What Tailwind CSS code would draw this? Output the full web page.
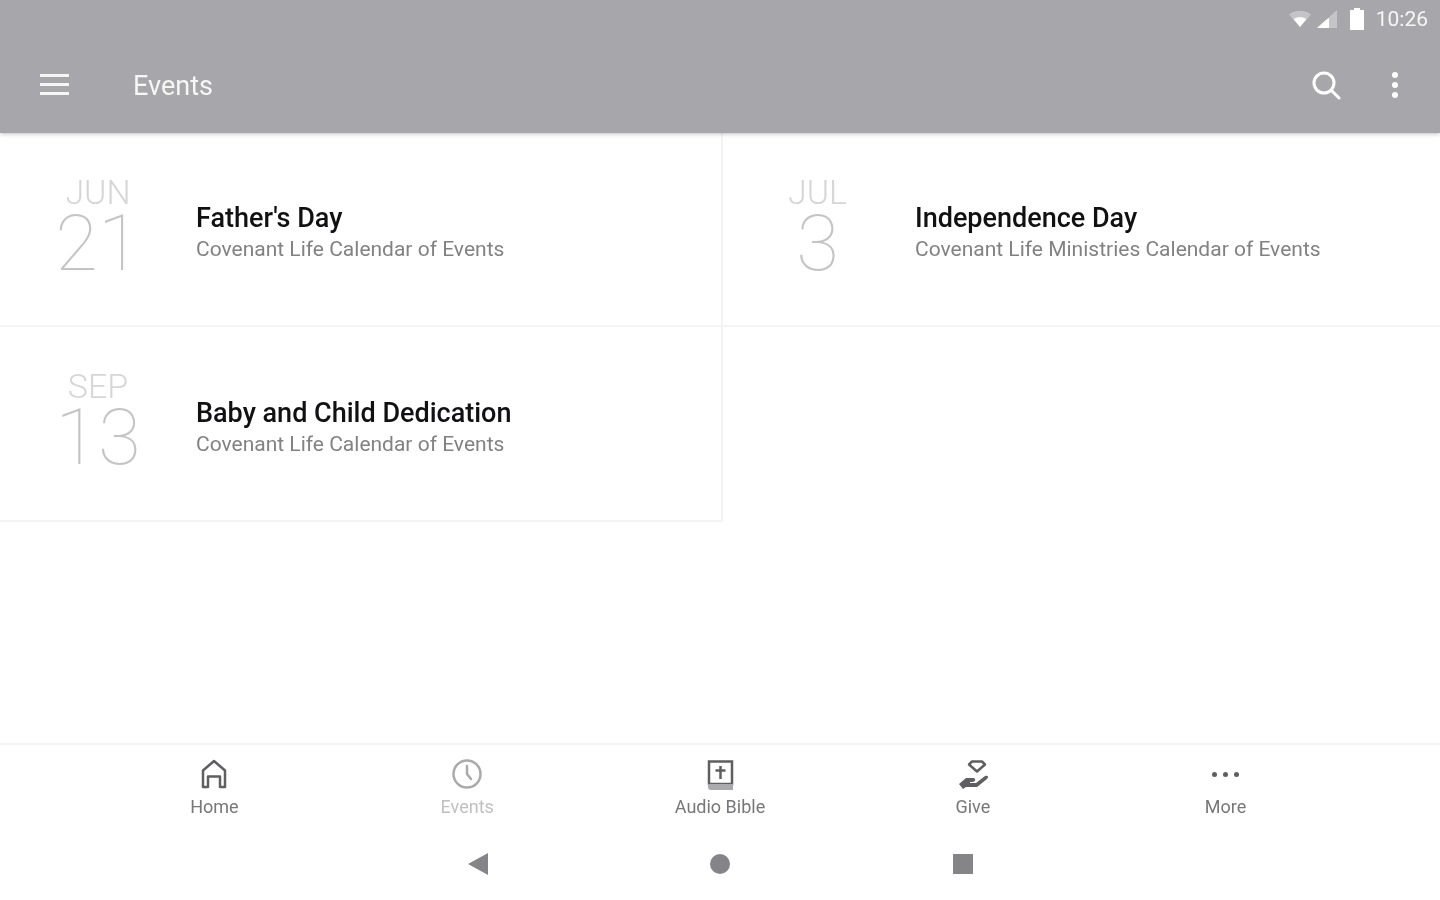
<!DOCTYPE html>
<html lang="en">
<head>
  <meta charset="UTF-8" />
  <title>Events</title>
  <script src="https://cdn.jsdelivr.net/npm/@tailwindcss/browser@4"></script>
</head>
<body class="bg-white h-[900px] w-[1440px] overflow-hidden flex flex-col font-['Roboto',sans-serif] blur-[0.5px]">

  <!-- app bar with status row -->
  <header class="h-[133px] bg-[#a7a7ab] shrink-0 shadow-[0_1px_4px_rgba(0,0,0,0.25)] relative">
    <div class="h-[38px] flex items-center justify-end pr-[12px]">
      <svg class="w-[22px] h-[16px] mr-[6px]" viewBox="0 0 22 16"><path d="M0 3.5C6-1.500 16-1.500 22 3.500L11 16z" fill="#fff" fill-opacity="0.35"/><path d="M4.500 8C8 5.500 14 5.500 17.500 8L11 16z" fill="#fff"/></svg>
      <svg class="w-[20px] h-[18px] mr-[12px]" viewBox="0 0 20 18"><path d="M20 0V18H0z" fill="#fff" fill-opacity="0.35"/><path d="M12 8V18H0L9 10z" fill="#fff"/></svg>
      <svg class="w-[16px] h-[22px] mr-[11px]" viewBox="0 0 16 22"><path d="M5 0h6v2h4v20H1V2h4z" fill="#fff"/></svg>
      <span class="text-[21px] leading-none text-white/90">10:26</span>
    </div>
    <div class="h-[95px] flex items-center pb-[2px]">
      <div class="w-[133px] pl-[40px] shrink-0">
        <div class="w-[29px] flex flex-col gap-[6px]">
          <div class="h-[3px] bg-white/90"></div>
          <div class="h-[3px] bg-white/90"></div>
          <div class="h-[3px] bg-white/90"></div>
        </div>
      </div>
      <h1 class="text-[27px] text-white/90 flex-1 pt-[4px]">Events</h1>
      <svg class="w-[30px] h-[30px] mr-[51px] ml-[1px]" viewBox="0 0 30 30" fill="none" stroke="#fff" stroke-width="3" stroke-linecap="round"><circle cx="13" cy="13" r="10"/><path d="M20.500 20.500 28 28"/></svg>
      <div class="w-[6px] flex flex-col gap-[4px] mr-[42px]">
        <div class="h-[6px] rounded-full bg-white"></div>
        <div class="h-[6px] rounded-full bg-white"></div>
        <div class="h-[6px] rounded-full bg-white"></div>
      </div>
    </div>
  </header>

  <!-- events -->
  <main class="flex-1 min-h-0">
    <div class="grid grid-cols-[723px_1fr]">
      <div class="h-[194px] border-r-2 border-b-2 border-[#f4f4f5] flex items-center">
        <div class="w-[196px] shrink-0 flex flex-col items-center pb-[6px]">
          <div class="text-[34px] leading-[34px] font-light text-[#d6d6d8]">JUN</div>
          <div class="text-[78px] leading-[69px] font-thin text-[#c4c4c6]">21</div>
        </div>
        <div class="pt-[8px]">
          <div class="text-[27px] leading-[32px] font-medium text-[#111113]">Father's Day</div>
          <div class="text-[21px] leading-[30px] text-[#828284]">Covenant Life Calendar of Events</div>
        </div>
      </div>
      <div class="h-[194px] border-b-2 border-[#f4f4f5] flex items-center">
        <div class="w-[189px] mr-[3px] shrink-0 flex flex-col items-center pb-[6px]">
          <div class="text-[34px] leading-[34px] font-light text-[#d6d6d8]">JUL</div>
          <div class="text-[78px] leading-[69px] font-thin text-[#c4c4c6]">3</div>
        </div>
        <div class="pt-[8px]">
          <div class="text-[27px] leading-[32px] font-medium text-[#111113]">Independence Day</div>
          <div class="text-[21px] leading-[30px] text-[#828284]">Covenant Life Ministries Calendar of Events</div>
        </div>
      </div>
      <div class="h-[195px] border-r-2 border-b-2 border-[#f4f4f5] flex items-center">
        <div class="w-[196px] shrink-0 flex flex-col items-center pb-[6px]">
          <div class="text-[34px] leading-[34px] font-light text-[#d6d6d8]">SEP</div>
          <div class="text-[78px] leading-[69px] font-thin text-[#c4c4c6]">13</div>
        </div>
        <div class="pt-[8px]">
          <div class="text-[27px] leading-[32px] font-medium text-[#111113]">Baby and Child Dedication</div>
          <div class="text-[21px] leading-[30px] text-[#828284]">Covenant Life Calendar of Events</div>
        </div>
      </div>
    </div>
  </main>

  <!-- bottom tabs -->
  <nav class="h-[157px] shrink-0 border-t-2 border-[#f4f4f5]">
    <div class="h-[88px] pl-[88px] pr-[88px] grid grid-cols-5 pt-[14px]">
      <div class="flex flex-col items-center text-[#77777a]">
        <svg class="w-[30px] h-[30px]" viewBox="0 0 30 30" fill="none" stroke="#5f5f62" stroke-width="2.500" stroke-linejoin="round"><path d="M4 28V11.500L15 2l11 9.500V28H21V17.500H9V28z"/></svg>
        <span class="text-[18px] leading-[20px] mt-[8px]">Home</span>
      </div>
      <div class="flex flex-col items-center text-[#c0c0c2]">
        <svg class="w-[30px] h-[30px]" viewBox="0 0 30 30" fill="none" stroke="#aaaaac" stroke-width="2.500" stroke-linecap="round"><circle cx="15" cy="15" r="13.500"/><path d="M15 7v8l4 5"/></svg>
        <span class="text-[18px] leading-[20px] mt-[8px]">Events</span>
      </div>
      <div class="flex flex-col items-center text-[#77777a]">
        <svg class="w-[30px] h-[32px]" viewBox="0 0 30 32" fill="none"><path d="M4 25V2.500h23V25z" stroke="#5f5f62" stroke-width="2.500"/><path d="M3 25h25v6H6a3 3 0 0 1-3-3z" fill="#aaaaac"/><path d="M15.500 7v13M10.500 11.500h10" stroke="#5f5f62" stroke-width="2.500"/></svg>
        <span class="text-[18px] leading-[20px] mt-[6px]">Audio Bible</span>
      </div>
      <div class="flex flex-col items-center text-[#77777a]">
        <svg class="w-[34px] h-[30px]" viewBox="0 0 34 30" fill="none"><path d="M16 2.500h10l3 3-8 7-8-7z" stroke="#5f5f62" stroke-width="2.500" stroke-linejoin="round"/><path d="M3 25l7-6h7c3 0 3 3 0 4h-3v1h6l9-7c3-1 4 1 2 3l-10 8H10l-3 2z" fill="#5f5f62"/></svg>
        <span class="text-[18px] leading-[20px] mt-[8px]">Give</span>
      </div>
      <div class="flex flex-col items-center text-[#77777a]">
        <div class="h-[30px] flex items-center gap-[6px]">
          <div class="w-[5px] h-[5px] rounded-full bg-[#5f5f62]"></div>
          <div class="w-[5px] h-[5px] rounded-full bg-[#5f5f62]"></div>
          <div class="w-[5px] h-[5px] rounded-full bg-[#5f5f62]"></div>
        </div>
        <span class="text-[18px] leading-[20px] mt-[8px]">More</span>
      </div>
    </div>
    <div class="flex items-center justify-center gap-[222.5px] pt-[20px]">
      <svg class="w-[20px] h-[22px]" viewBox="0 0 20 22"><path d="M20 0V22L0 11z" fill="#858587"/></svg>
      <div class="w-[20px] h-[20px] rounded-full bg-[#858587]"></div>
      <div class="w-[20px] h-[20px] bg-[#858587]"></div>
    </div>
  </nav>

</body>
</html>
